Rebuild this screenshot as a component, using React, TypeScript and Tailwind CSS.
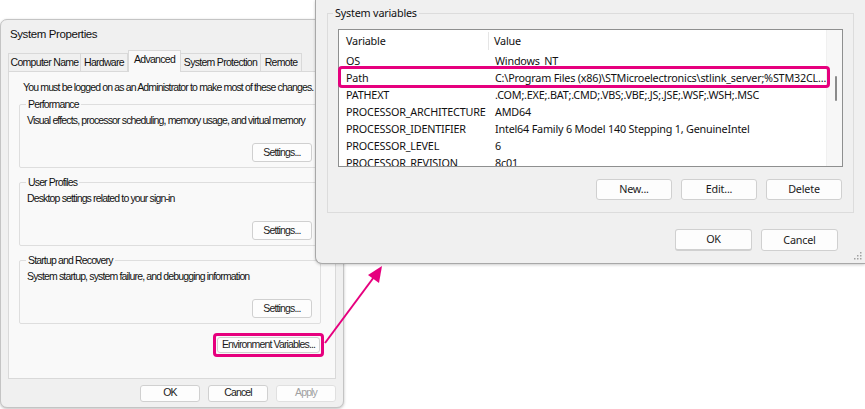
import React from "react";

const PINK = "#e6007e";

function WinButton({ label, className = "", disabled = false }: { label: string; className?: string; disabled?: boolean }) {
  return (
    <div
      className={`flex items-center justify-center whitespace-nowrap rounded-[3px] border border-[#d0d0d0] bg-[#fdfdfd] ${
        disabled ? "text-[#a0a0a0]" : "text-[#1b1b1b]"
      } ${className}`}
    >
      {label}
    </div>
  );
}

function GroupBox({ title, text }: { title: string; text: string }) {
  return (
    <div className="relative h-[64px] w-[302px] rounded-[2px] border border-[#dedede]">
      <span className="absolute left-[6px] top-[-8px] whitespace-nowrap bg-[#f9f9f9] px-[2px] leading-[15px]">{title}</span>
      <div className="whitespace-nowrap pl-[7px] pt-[8px] leading-[15px]">{text}</div>
      <div className="flex justify-end pr-[8px] pt-[15px]">
        <WinButton label="Settings..." className="h-[19px] w-[60px]" />
      </div>
    </div>
  );
}

const tabs: [string, string][] = [
  ["Computer Name", "w-[73px]"],
  ["Hardware", "w-[47px]"],
  ["Advanced", "w-[53px]"],
  ["System Protection", "w-[80px]"],
  ["Remote", "w-[41px]"],
];

function SystemProperties() {
  return (
    <div className="absolute left-0 top-[19px] flex h-[389px] w-[344px] flex-col overflow-hidden rounded-[7px] border border-[#c4c4c4] bg-[#f0f0f0] font-['Liberation_Sans',sans-serif] text-[10.5px] tracking-[-0.85px] text-[#111] shadow-[0_1px_3px_rgba(0,0,0,0.25)]">
      <div className="flex h-[28px] items-center pl-[9px] pt-[1px] text-[11.5px] tracking-[-0.4px]">System Properties</div>
      <div className="flex h-[23px] items-end pl-[7px] tracking-[-0.7px]">
        {tabs.map(([t, w]) => {
          const active = t === "Advanced";
          return (
            <div
              key={t}
              className={
                active
                  ? `relative z-10 mb-[-1px] flex h-[22px] items-center justify-center whitespace-nowrap border border-b-0 border-[#d9d9d9] bg-[#f9f9f9] pb-[4px] ${w}`
                  : `flex h-[18px] items-center justify-center whitespace-nowrap border border-b-0 border-l-0 border-[#d9d9d9] bg-[#f0f0f0] first:border-l ${w}`
              }
            >
              {t}
            </div>
          );
        })}
      </div>
      <div className="mx-[7px] flex h-[308px] flex-col border border-[#d9d9d9] bg-[#f9f9f9] pl-[10px]">
        <div className="whitespace-nowrap pl-[4px] pt-[8px] leading-[15px]">
          You must be logged on as an Administrator to make most of these changes.
        </div>
        <div className="mt-[9px] flex flex-col gap-[14px]">
          <GroupBox title="Performance" text="Visual effects, processor scheduling, memory usage, and virtual memory" />
          <GroupBox title="User Profiles" text="Desktop settings related to your sign-in" />
          <GroupBox title="Startup and Recovery" text="System startup, system failure, and debugging information" />
        </div>
        <div className="mt-[9px] flex justify-end pr-[11px]">
          <div className="rounded-[4px] border-[3px] p-[1px]" style={{ borderColor: PINK }}>
            <WinButton label="Environment Variables..." className="h-[16px] w-[103px] border-[#3d6fb5]" />
          </div>
        </div>
      </div>
      <div className="flex flex-1 items-center justify-end gap-[8px] pr-[7px]">
        <WinButton label="OK" className="h-[17px] w-[60px]" />
        <WinButton label="Cancel" className="h-[17px] w-[60px]" />
        <WinButton label="Apply" className="h-[17px] w-[60px] border-[#e0e0e0] bg-[#f7f7f7]" disabled />
      </div>
    </div>
  );
}

const vars: [string, string][] = [
  ["OS", "Windows_NT"],
  ["Path", "C:\\Program Files (x86)\\STMicroelectronics\\stlink_server;%STM32CL..."],
  ["PATHEXT", ".COM;.EXE;.BAT;.CMD;.VBS;.VBE;.JS;.JSE;.WSF;.WSH;.MSC"],
  ["PROCESSOR_ARCHITECTURE", "AMD64"],
  ["PROCESSOR_IDENTIFIER", "Intel64 Family 6 Model 140 Stepping 1, GenuineIntel"],
  ["PROCESSOR_LEVEL", "6"],
  ["PROCESSOR_REVISION", "8c01"],
];

function EnvironmentVariables() {
  return (
    <div className="absolute left-[315px] top-0 flex h-[264px] w-[550px] flex-col rounded-bl-[7px] border-b border-l border-[#a8a8a8] bg-[#f0f0f0] font-['Noto_Sans',sans-serif] text-[10.8px] tracking-[-0.2px] text-[#111] shadow-[0_1px_3px_rgba(0,0,0,0.2)]">
      <div className="relative ml-[11px] mt-[13px] h-[200px] w-[527px] border border-[#dcdcdc]">
        <span className="absolute left-[5px] top-[-10px] bg-[#f0f0f0] px-[2px] leading-[18px]">System variables</span>
        <div className="ml-[10px] mt-[15px] flex h-[138px] w-[505px] overflow-hidden border border-[#8e8f8f] bg-white">
          <div className="flex-1">
            <div className="flex h-[22px] items-end pb-[2px]">
              <div className="w-[150px] border-r border-[#e5e5e5] pl-[7px] leading-[18px]">Variable</div>
              <div className="pl-[5px] leading-[18px]">Value</div>
            </div>
            {vars.map(([k, v]) => (
              <div key={k} className="flex h-[17px] items-center leading-[17px]">
                <div className="w-[156px] whitespace-nowrap pl-[7px]">{k}</div>
                <div className="whitespace-nowrap">{v}</div>
              </div>
            ))}
          </div>
          <div className="relative w-[17px] border-l border-[#f0f0f0] bg-[#f7f7f7]">
            <div className="absolute left-[8px] top-[46px] h-[25px] w-[2px] rounded-full bg-[#8a8a8a]" />
          </div>
        </div>
        <div
          className="absolute left-[10px] top-[52px] h-[22px] w-[492px] rounded-[4px] border-[3px]"
          style={{ borderColor: PINK }}
        />
        <div className="mr-[11px] mt-[12px] flex justify-end gap-[9px]">
          <WinButton label="New..." className="h-[21px] w-[76px]" />
          <WinButton label="Edit..." className="h-[21px] w-[76px]" />
          <WinButton label="Delete" className="h-[21px] w-[76px]" />
        </div>
      </div>
      <div className="mr-[27px] mt-[16px] flex justify-end gap-[9px]">
        <WinButton label="OK" className="h-[22px] w-[77px] border-[#0067c0] border-b-[2px]" />
        <WinButton label="Cancel" className="h-[22px] w-[77px]" />
      </div>
      <svg className="absolute bottom-[3px] right-[3px]" width="8" height="8" viewBox="0 0 8 8">
        {[
          [6, 0],
          [6, 3],
          [3, 3],
          [6, 6],
          [3, 6],
          [0, 6],
        ].map(([x, y], i) => (
          <rect key={i} x={x} y={y} width="1.5" height="1.5" fill="#a0a0a0" />
        ))}
      </svg>
    </div>
  );
}

export default function App() {
  return (
    <div className="relative h-[409px] w-[865px] overflow-hidden bg-white">
      <SystemProperties />
      <EnvironmentVariables />
      <svg className="absolute left-0 top-0" width="865" height="409">
        <line x1="325" y1="343" x2="374" y2="277" stroke={PINK} strokeWidth="2" />
        <polygon points="382,266 368,275 379,283" fill={PINK} />
      </svg>
    </div>
  );
}
